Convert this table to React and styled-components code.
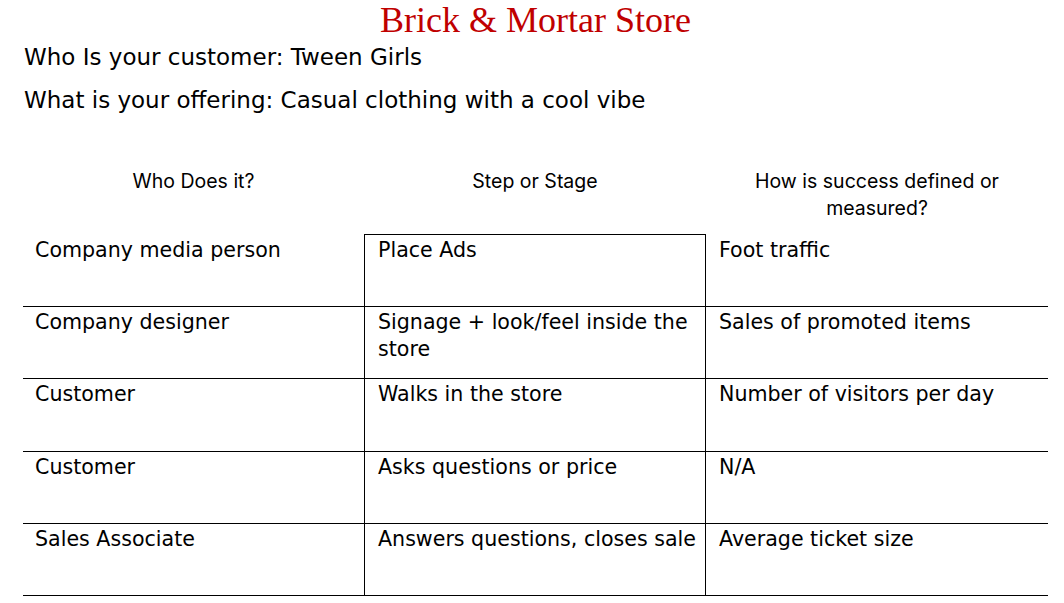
import React from 'react';
import styled, { createGlobalStyle } from 'styled-components';

const GlobalStyle = createGlobalStyle`
  body {
    margin: 0;
    background: #fff;
    color: #000;
    font-family: "DejaVu Sans", sans-serif;
  }
`;

const Page = styled.div`
  width: 1064px;
  height: 603px;
  padding: 0 16px 0 23px;
  box-sizing: border-box;
  overflow: hidden;
`;

const Title = styled.h1`
  margin: 0;
  padding-top: 1px;
  text-align: center;
  font-family: "Liberation Serif", serif;
  font-weight: normal;
  font-size: 36px;
  line-height: 38px;
  color: #c00000;
`;

const Info = styled.p`
  margin: ${(p) => p.$top}px 0 0 1px;
  font-size: 23px;
  line-height: 28px;
`;

const Grid = styled.div`
  margin-top: 51px;
  display: grid;
  grid-template-columns: 341px 342px 342px;
`;

const Head = styled.div`
  height: 69px;
  padding: 3px 8px 0;
  box-sizing: border-box;
  text-align: center;
  font-family: "Inter", sans-serif;
  font-size: 19.5px;
  line-height: 27px;
`;

const Cell = styled.div`
  height: ${(p) => (p.$first ? 73 : 72.25)}px;
  box-sizing: border-box;
  padding: 2px 3px 0 ${(p) => (p.$col === 0 ? 12 : 13)}px;
  font-size: 20.6px;
  line-height: 27px;
  border-bottom: 1px solid #000;
  border-top: ${(p) => (p.$first ? '1px solid' : 'none')};
  border-top-color: ${(p) => (p.$col === 1 ? '#000' : 'transparent')};
  border-left: ${(p) => (p.$col === 1 ? '1px solid #000' : 'none')};
  border-right: ${(p) => (p.$col === 1 ? '1px solid #000' : 'none')};
`;

const headers = ['Who Does it?', 'Step or Stage', 'How is success defined or measured?'];

const rows = [
  ['Company media person', 'Place Ads', 'Foot traffic'],
  ['Company designer', 'Signage + look/feel inside the store', 'Sales of promoted items'],
  ['Customer', 'Walks in the store', 'Number of visitors per day'],
  ['Customer', 'Asks questions or price', 'N/A'],
  ['Sales Associate', 'Answers questions, closes sale', 'Average ticket size'],
];

const App = () => (
  <Page>
    <GlobalStyle />
    <Title>Brick &amp; Mortar Store</Title>
    <Info $top={4}>Who Is your customer: Tween Girls</Info>
    <Info $top={15}>What is your offering: Casual clothing with a cool vibe</Info>
    <Grid>
      {headers.map((h) => (
        <Head key={h}>{h}</Head>
      ))}
      {rows.map((row, r) =>
        row.map((text, c) => (
          <Cell key={`${r}-${c}`} $col={c} $first={r === 0}>
            {text}
          </Cell>
        ))
      )}
    </Grid>
  </Page>
);

export default App;
